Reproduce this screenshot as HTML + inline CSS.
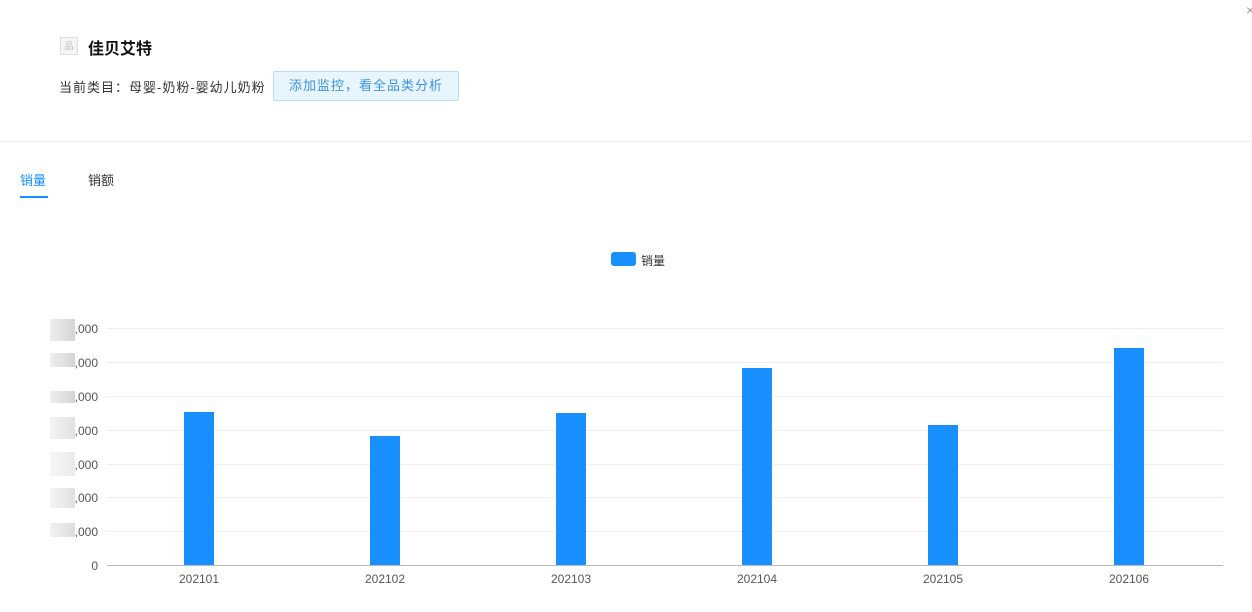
<!DOCTYPE html><html><head><meta charset="utf-8"><style>
body{margin:0;width:1252px;height:612px;background:#fff;font-family:"Liberation Sans","Noto Sans CJK SC",sans-serif;position:relative;overflow:hidden;color:#333}
.a{position:absolute}
.g{position:absolute;left:107px;width:1116px;height:1px;background:#eceef2}
.bar{position:absolute;width:30px;background:#1890ff;bottom:47px}
.yl{position:absolute;left:60px;width:38px;text-align:right;font-size:12px;color:#555;line-height:14px}
.blur{position:absolute;left:50px;width:25px;height:22px;background:linear-gradient(90deg,#eee,#e2e2e2 50%,#d4d4d4)}
.xl{position:absolute;top:572px;font-size:12px;color:#555;width:80px;text-align:center}
</style></head><body>
<div class="a" style="left:60px;top:37px;width:16px;height:16px;border:1px solid #ddd;background:#f5f5f5;font-size:9px;color:#bbb;text-align:center;line-height:16px">品</div>
<div class="a" style="left:88px;top:35px;font-size:16px;font-weight:bold;color:#111">佳贝艾特</div>
<div class="a" style="left:59px;top:77px;font-size:13px;color:#333;letter-spacing:1px">当前类目：母婴-奶粉-婴幼儿奶粉</div>
<div class="a" style="left:273px;top:71px;width:184px;height:28px;border:1px solid #b9dcf8;background:#e8f4fe;border-radius:2px;color:#3a95e0;font-size:13px;line-height:28px;text-align:center;letter-spacing:1px">添加监控，看全品类分析</div>
<div class="a" style="left:1246px;top:2px;color:#999;font-size:14px">×</div>
<div class="a" style="left:0;top:141px;width:1252px;height:1px;background:#eee"></div>
<div class="a" style="left:20px;top:170px;font-size:13px;color:#1890ff">销量</div>
<div class="a" style="left:20px;top:196px;width:28px;height:2px;background:#1890ff"></div>
<div class="a" style="left:88px;top:170px;font-size:13px;color:#333">销额</div>
<div class="a" style="left:611px;top:252px;width:25px;height:14px;border-radius:3px;background:#1890ff"></div>
<div class="a" style="left:641px;top:252px;font-size:12px;color:#333">销量</div>
<div class="g" style="top:328px"></div><div class="g" style="top:362px"></div><div class="g" style="top:396px"></div><div class="g" style="top:430px"></div><div class="g" style="top:464px"></div><div class="g" style="top:497px"></div><div class="g" style="top:531px"></div>
<div class="a" style="left:107px;top:565px;width:1116px;height:1px;background:#bbb"></div>
<div class="yl" style="top:322px">,000</div><div class="yl" style="top:356px">,000</div><div class="yl" style="top:390px">,000</div><div class="yl" style="top:424px">,000</div><div class="yl" style="top:458px">,000</div><div class="yl" style="top:491px">,000</div><div class="yl" style="top:525px">,000</div><div class="yl" style="top:559px">0</div>
<div class="blur" style="top:319px"></div><div class="blur" style="top:353px;height:14px"></div><div class="blur" style="top:391px;height:12px"></div><div class="blur" style="top:417px;height:22px;opacity:.7"></div><div class="blur" style="top:452px;height:24px;opacity:.5"></div><div class="blur" style="top:488px;height:20px;opacity:.7"></div><div class="blur" style="top:523px;height:14px;opacity:.8"></div>
<div class="bar" style="left:184px;top:412px"></div>
<div class="bar" style="left:370px;top:436px"></div>
<div class="bar" style="left:556px;top:413px"></div>
<div class="bar" style="left:742px;top:368px"></div>
<div class="bar" style="left:928px;top:425px"></div>
<div class="bar" style="left:1114px;top:348px"></div>
<div class="xl" style="left:159px">202101</div><div class="xl" style="left:345px">202102</div><div class="xl" style="left:531px">202103</div><div class="xl" style="left:717px">202104</div><div class="xl" style="left:903px">202105</div><div class="xl" style="left:1089px">202106</div>
</body></html>
